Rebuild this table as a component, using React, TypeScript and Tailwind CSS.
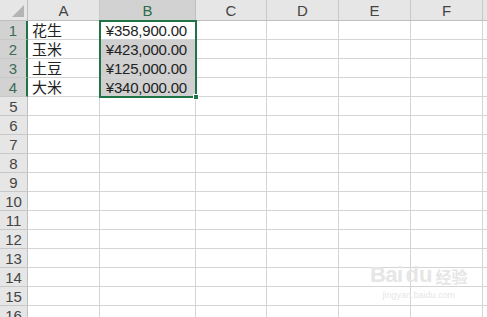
import React from 'react'

const cols = [
  { name: 'A', w: 72 },
  { name: 'B', w: 96 },
  { name: 'C', w: 71 },
  { name: 'D', w: 72 },
  { name: 'E', w: 72 },
  { name: 'F', w: 72 },
  { name: 'G', w: 72 },
]

const data: Record<number, [string, string]> = {
  1: ['花生', '¥358,900.00'],
  2: ['玉米', '¥423,000.00'],
  3: ['土豆', '¥125,000.00'],
  4: ['大米', '¥340,000.00'],
}

const rows = Array.from({ length: 16 }, (_, i) => i + 1)

function App() {
  return (
    <div
      className="relative w-[487px] h-[317px] overflow-hidden bg-white text-[#222]"
      style={{ fontFamily: '"Liberation Sans", "Noto Sans CJK SC", sans-serif' }}
    >
      {/* column headers */}
      <div className="flex h-[21px] bg-[#e6e6e6] border-b border-[#bfbfbf]">
        <div className="relative w-[28px] shrink-0 border-r border-[#bfbfbf]">
          <div className="absolute right-[3px] bottom-[3px] w-0 h-0 border-l-[12px] border-l-transparent border-b-[12px] border-b-[#b4b4b4]" />
        </div>
        {cols.map((c) => (
          <div
            key={c.name}
            style={{ width: c.w }}
            className={`shrink-0 flex items-center justify-center text-[15px] leading-none border-r ${
              c.name === 'B' ? 'bg-[#d2d2d2] text-[#2f6b4a] border-[#bfbfbf]' : 'text-[#444] border-[#c8c8c8]'
            }`}
          >
            {c.name}
          </div>
        ))}
      </div>

      {rows.map((r) => {
        const sel = r <= 4
        return (
          <div key={r} className="flex h-[19px]">
            <div
              className={`w-[28px] shrink-0 flex items-center justify-center text-[15px] leading-none border-b border-[#c8c8c8] ${
                sel ? 'bg-[#d2d2d2] text-[#3d6b55] border-r-2 border-r-[#217346]' : 'bg-[#e6e6e6] text-[#444] border-r border-r-[#bfbfbf]'
              }`}
            >
              {r}
            </div>
            {cols.map((c) => {
              const shade = c.name === 'B' && r >= 2 && r <= 4
              let content: React.ReactNode = null
              if (data[r] && c.name === 'A') content = data[r][0]
              if (data[r] && c.name === 'B') content = data[r][1]
              return (
                <div
                  key={c.name}
                  style={{ width: c.w }}
                  className={`shrink-0 flex items-center border-r border-b border-[#d4d4d4] text-[15px] leading-none ${
                    c.name === 'B' ? 'justify-end pr-[8px] text-[13px] tracking-[-0.2px]' : 'pl-[4px]'
                  } ${shade ? 'bg-[#d0d0d0]' : ''}`}
                >
                  {content}
                </div>
              )
            })}
          </div>
        )
      })}

      {/* selection border */}
      <div className="absolute left-[99px] top-[20px] w-[98px] h-[78px] border-2 border-[#217346] pointer-events-none" />
      <div className="absolute left-[193px] top-[94px] w-[6px] h-[6px] bg-[#217346] border border-white" />

      {/* watermark */}
      <div className="absolute left-[370px] top-[264px] flex flex-col items-center text-[#e6e6e6] leading-none">
        <div className="flex items-end gap-[3px]">
          <span className="text-[22px] font-bold tracking-tight">Bai</span>
          <span className="text-[22px] font-bold">du</span>
          <span className="text-[16px] font-bold">经验</span>
        </div>
        <span className="text-[9px] mt-[5px]">jingyan.baidu.com</span>
      </div>
    </div>
  )
}

export default App
